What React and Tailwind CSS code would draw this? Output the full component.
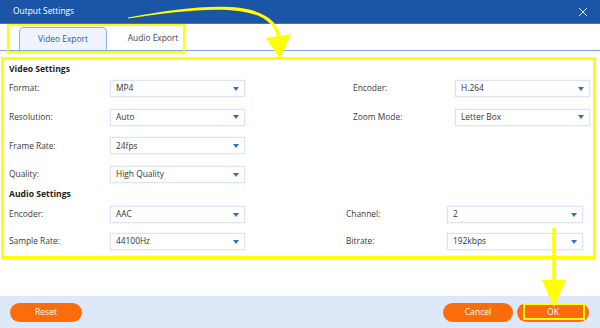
import React from "react";

function Select({ value }) {
  return (
    <div className="h-[17px] w-full bg-white border border-[#dbe4f2] shadow-[0_0_1px_rgba(120,150,200,0.35)] flex items-center justify-between pl-[5px] pr-[5px] text-[8.4px] text-[#333]">
      <span>{value}</span>
      <svg width="6" height="4" viewBox="0 0 6 4">
        <path d="M0 0 L6 0 L3 4 Z" fill="#2f6fd6" />
      </svg>
    </div>
  );
}

function Label({ children }) {
  return <div className="h-[17px] flex items-center text-[8.4px] text-[#3a3a3a]">{children}</div>;
}

export default function App() {
  return (
    <div
      className="relative w-[600px] h-[328px] bg-white overflow-hidden flex flex-col"
      style={{ fontFamily: '"Open Sans", "Noto Sans", sans-serif' }}
    >
      {/* title bar */}
      <div className="h-[24px] shrink-0 bg-[#1a56a5] border-b border-[#3f76bb] flex items-center justify-between pl-[13px] pr-[12px]">
        <span className="text-[8.4px] text-white">Output Settings</span>
        <svg width="10" height="10" viewBox="0 0 10 10">
          <path d="M1 1 L9 9 M9 1 L1 9" stroke="#dbe7f7" strokeWidth="1" />
        </svg>
      </div>

      {/* tabs */}
      <div className="h-[27px] shrink-0 border-b border-[#7ea6da] flex items-end pl-[19px]">
        <div className="w-[88px] h-[23px] rounded-t-[5px] border border-b-0 border-[#8db0e0] bg-[#eef3fd] flex items-center justify-center text-[8.4px] text-[#2f5b9c]">
          Video Export
        </div>
        <div className="w-[92px] h-[23px] flex items-center justify-center text-[8.4px] text-[#444]">
          Audio Export
        </div>
      </div>

      {/* content */}
      <div className="flex-1 pl-[9px] pt-[12px]">
        <div className="h-[12px] flex items-center text-[8.6px] font-bold text-[#222]">Video Settings</div>
        <div className="mt-[5px] grid grid-cols-[101px_135px_108px_102px_135px] gap-y-[11.7px]">
          <Label>Format:</Label>
          <Select value="MP4" />
          <div />
          <Label>Encoder:</Label>
          <Select value="H.264" />

          <Label>Resolution:</Label>
          <Select value="Auto" />
          <div />
          <Label>Zoom Mode:</Label>
          <Select value="Letter Box" />

          <Label>Frame Rate:</Label>
          <Select value="24fps" />
          <div />
          <div />
          <div />

          <Label>Quality:</Label>
          <Select value="High Quality" />
          <div />
          <div />
          <div />
        </div>
        <div className="mt-[5px] h-[12px] flex items-center text-[8.6px] font-bold text-[#222]">Audio Settings</div>
        <div className="mt-[6px] grid grid-cols-[101px_135px_101px_101px_136px] gap-y-[10px]">
          <Label>Encoder:</Label>
          <Select value="AAC" />
          <div />
          <Label>Channel:</Label>
          <Select value="2" />

          <Label>Sample Rate:</Label>
          <Select value="44100Hz" />
          <div />
          <Label>Bitrate:</Label>
          <Select value="192kbps" />
        </div>
      </div>

      {/* footer */}
      <div className="h-[32px] shrink-0 bg-[#dde9f9] flex items-center justify-between pl-[10px] pr-[11px]">
        <button className="w-[72px] h-[19px] rounded-full bg-[#fd6c0b] text-white text-[8.6px]">Reset</button>
        <div className="flex gap-[4px]">
          <button className="w-[70px] h-[19px] rounded-full bg-[#fd6c0b] text-white text-[8.6px]">Cancel</button>
          <button className="w-[72px] h-[19px] rounded-full bg-[#fd6c0b] text-white text-[8.6px]">OK</button>
        </div>
      </div>

      {/* yellow annotation overlays */}
      <div className="absolute left-[7px] top-[24px] w-[178px] h-[29px] border-2 border-[#ffff00] pointer-events-none" />
      <div className="absolute left-[1px] top-[57px] w-[595px] h-[202px] border-[3px] border-[#ffff00] pointer-events-none" />
      <div className="absolute left-[523px] top-[303px] w-[62px] h-[17px] border-2 border-[#ffff00] pointer-events-none" />
      <svg className="absolute left-0 top-0 pointer-events-none" width="600" height="328" viewBox="0 0 600 328">
        <path d="M128 17.6 C 210 2.5, 277 -2, 281 40 L 277.5 40 C 273.5 2, 210 6, 128 18.4 Z" fill="#ffff00" />
        <path d="M266 38 L291 34 L280 59 Z" fill="#ffff00" />
        <path d="M554 228 L554 284" stroke="#ffff00" strokeWidth="3.5" />
        <path d="M542 280 L566 280 L554 307 Z" fill="#ffff00" />
      </svg>
    </div>
  );
}
